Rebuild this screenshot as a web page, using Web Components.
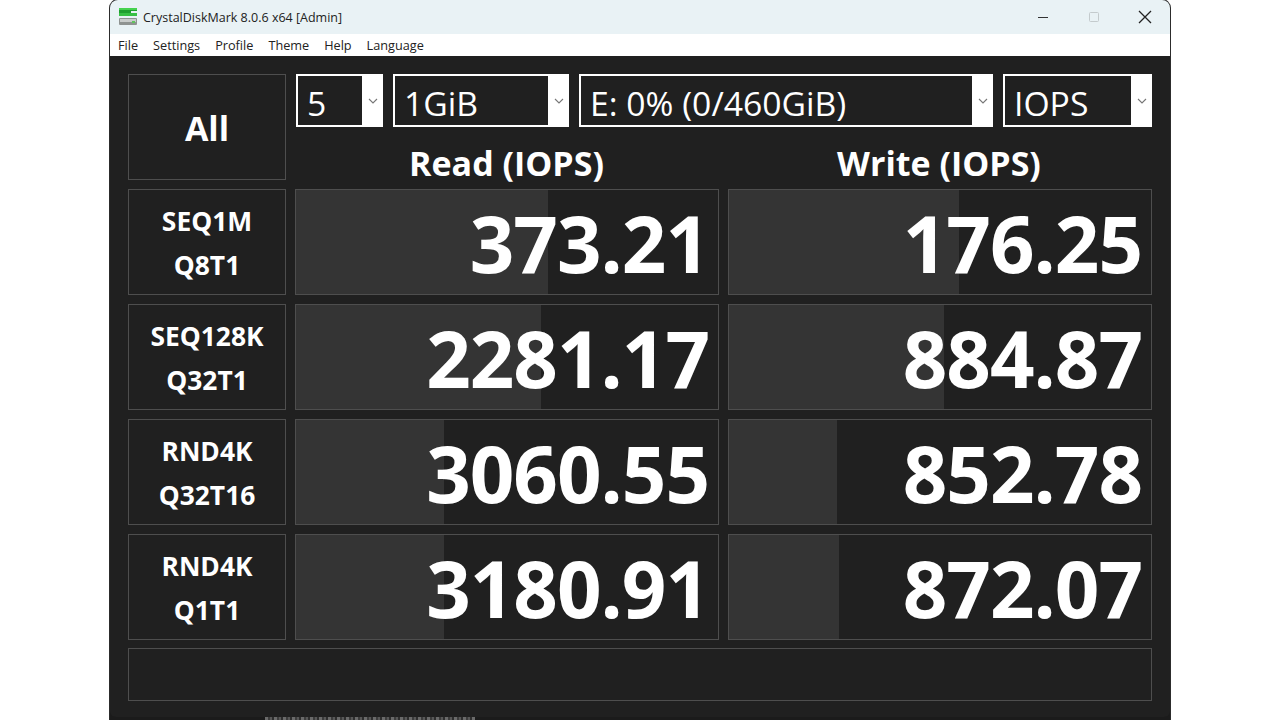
<!DOCTYPE html>
<html>
<head>
<meta charset="utf-8">
<title>CrystalDiskMark</title>
<style>
    html, body { margin: 0; height: 100%; background: #fff; overflow: hidden; }
    body { font-family: "Open Sans", "Noto Sans", sans-serif; }
</style>
</head>
<body>
<cdm-window>
    <cdm-titlebar slot="chrome">CrystalDiskMark 8.0.6 x64 [Admin]</cdm-titlebar>
    <cdm-menubar slot="chrome"></cdm-menubar>
    <cdm-button class="all">All</cdm-button>
    <cdm-controls></cdm-controls>
    <cdm-row name="SEQ1M" sub="Q8T1" read="373.21" write="176.25" rbar="59.7" wbar="54.5"></cdm-row>
    <cdm-row name="SEQ128K" sub="Q32T1" read="2281.17" write="884.87" rbar="58" wbar="51"></cdm-row>
    <cdm-row name="RND4K" sub="Q32T16" read="3060.55" write="852.78" rbar="35" wbar="25.5"></cdm-row>
    <cdm-row name="RND4K" sub="Q1T1" read="3180.91" write="872.07" rbar="35" wbar="26"></cdm-row>
    <cdm-comment></cdm-comment>
</cdm-window>
<script>
/**
 * Window frame: white page, dark client area, light chrome on top.
 */
class CdmWindow extends HTMLElement {
    constructor() {
        super();
        this.attachShadow({ mode: 'open' }).innerHTML = `
<style>
    :host {
        display: flex;
        flex-direction: column;
        width: 1060px;
        height: 720px;
        margin-left: 110px;
        background: #1b1b1b;
        border-radius: 8px 8px 0 0;
        overflow: hidden;
        box-shadow: 0 0 0 1px #2c2c2c;
    }
    .client {
        flex: 1;
        display: grid;
        grid-template-columns: 158px 1fr;
        grid-auto-rows: min-content;
        column-gap: 9px;
        row-gap: 9px;
        padding: 18px 18px 0 18px;
        align-content: start;
        background: #202020;
        border-radius: 0 0 6px 6px;
    }
    /* bit of whatever sits behind the window, only its top edge shows */
    .behind { height: 3px; flex: none; padding-left: 155px; }
    .behind div {
        width: 210px;
        height: 100%;
        background: repeating-linear-gradient(90deg, #6a6a6a 0 3px, #3c3c3c 3px 5px, #585858 5px 7px, #2e2e2e 7px 9px);
    }
</style>
<slot name="chrome"></slot>
<div class="client"><slot></slot></div>
<div class="behind"><div></div></div>`;
    }
}

class CdmTitlebar extends HTMLElement {
    constructor() {
        super();
        this.attachShadow({ mode: 'open' }).innerHTML = `
<style>
    :host {
        display: flex;
        align-items: center;
        height: 34px;
        background: #e9f2f5;
        color: #222;
        font-size: 12.5px;
        padding-left: 8px;
        box-sizing: border-box;
    }
    .icon { width: 20px; height: 20px; margin-right: 5px; flex: none; }
    .text { flex: 1; }
    .btn { width: 51px; height: 34px; display: flex; align-items: center; justify-content: center; }
    .btn svg { width: 16px; height: 16px; }
</style>
<svg class="icon" viewBox="0 0 20 20">
    <rect x="1" y="1" width="18" height="2" fill="#45d24f"/>
    <rect x="1" y="3" width="18" height="3" fill="#1f9f2f"/>
    <rect x="1" y="6" width="18" height="3" fill="#37c044"/>
    <rect x="13" y="4" width="6" height="2" fill="#e9f2f5"/>
    <rect x="1" y="11" width="18" height="7" rx="1" fill="#8f9391"/>
    <rect x="2" y="12" width="16" height="3" fill="#c9cccb"/>
    <rect x="14" y="14" width="3" height="2" fill="#5fc45c"/>
</svg>
<span class="text"><slot></slot></span>
<div class="btn"><svg viewBox="0 0 16 16"><path d="M3 8.5h10" stroke="#333" stroke-width="1.2"/></svg></div>
<div class="btn"><svg viewBox="0 0 16 16"><rect x="3.5" y="3.5" width="9" height="9" rx="1" fill="none" stroke="#c4cbcd"/></svg></div>
<div class="btn"><svg viewBox="0 0 16 16"><path d="M2 2l12 12M14 2L2 14" stroke="#222" stroke-width="1.3"/></svg></div>`;
    }
}

class CdmMenubar extends HTMLElement {
    constructor() {
        super();
        const items = ['File', 'Settings', 'Profile', 'Theme', 'Help', 'Language'];
        this.attachShadow({ mode: 'open' }).innerHTML = `
<style>
    :host {
        display: flex;
        align-items: center;
        gap: 15px;
        height: 22px;
        background: #fff;
        color: #222;
        font-size: 12.7px;
        padding: 0 0 0 8px;
        box-sizing: border-box;
    }
</style>
${items.map(i => `<span>${i}</span>`).join('')}`;
    }
}

/** Plain bordered dark button, used for All and the test names. */
class CdmButton extends HTMLElement {
    constructor() {
        super();
        this.attachShadow({ mode: 'open' }).innerHTML = `
<style>
    :host {
        display: flex;
        flex-direction: column;
        align-items: center;
        justify-content: center;
        box-sizing: border-box;
        height: 106px;
        padding-top: 2px;
        border: 1px solid #4e4e4e;
        background: #202020;
        color: #fff;
        font-weight: 700;
        font-size: 26.4px;
        line-height: 44px;
    }
    :host(.all) { font-size: 34px; }
</style>
<slot></slot>`;
    }
}

class CdmSelect extends HTMLElement {
    constructor() {
        super();
        this.attachShadow({ mode: 'open' }).innerHTML = `
<style>
    :host {
        display: flex;
        box-sizing: border-box;
        height: 53px;
        background: #fff;
        padding: 2px 0 2px 2px;
    }
    .val {
        flex: 1;
        min-width: 0;
        background: #202020;
        color: #fff;
        font-size: 33.7px;
        line-height: 54px;
        padding-left: 9px;
        white-space: nowrap;
        overflow: hidden;
    }
    .arrow { width: 21px; flex: none; display: flex; align-items: center; justify-content: center; }
    .arrow svg { width: 10px; height: 6px; }
</style>
<div class="val"><slot></slot></div>
<div class="arrow"><svg viewBox="0 0 10 6"><path d="M1 1l4 4 4-4" fill="none" stroke="#777" stroke-width="1.1"/></svg></div>`;
    }
}

class CdmControls extends HTMLElement {
    constructor() {
        super();
        this.attachShadow({ mode: 'open' }).innerHTML = `
<style>
    :host { display: block; height: 106px; }
    .top { display: grid; grid-template-columns: 87px 176px 414px 149px; column-gap: 10px; margin-left: 1px; }
    .heads { display: grid; grid-template-columns: 423px 424px; column-gap: 9px; margin-top: 16px; }
    .head { text-align: center; color: #fff; font-weight: 700; font-size: 34px; line-height: 40px; }
</style>
<div class="top">
    <cdm-select>5</cdm-select>
    <cdm-select>1GiB</cdm-select>
    <cdm-select>E: 0% (0/460GiB)</cdm-select>
    <cdm-select>IOPS</cdm-select>
</div>
<div class="heads">
    <div class="head">Read (IOPS)</div>
    <div class="head">Write (IOPS)</div>
</div>`;
    }
}

/** One result box: a lighter meter behind a right-aligned number. */
class CdmResult extends HTMLElement {
    constructor() {
        super();
        this.attachShadow({ mode: 'open' }).innerHTML = `
<style>
    :host {
        display: flex;
        align-items: center;
        justify-content: flex-end;
        position: relative;
        box-sizing: border-box;
        height: 106px;
        border: 1px solid #4e4e4e;
        background: #202020;
        color: #fff;
        font-weight: 700;
        font-size: 78px;
        letter-spacing: -1px;
        padding: 2px 9px 0 0;
    }
    .bar { position: absolute; left: 0; top: 0; bottom: 0; background: #343434; }
    .num { position: relative; }
</style>
<div class="bar"></div><span class="num"></span>`;
    }
    connectedCallback() {
        this.shadowRoot.querySelector('.bar').style.width = this.getAttribute('bar') + '%';
        this.shadowRoot.querySelector('.num').textContent = this.getAttribute('value');
    }
}

class CdmRow extends HTMLElement {
    constructor() {
        super();
        this.attachShadow({ mode: 'open' });
    }
    connectedCallback() {
        const a = n => this.getAttribute(n);
        this.shadowRoot.innerHTML = `
<style>
    :host { display: contents; }
    .vals { display: grid; grid-template-columns: 424px 424px; column-gap: 9px; }
</style>
<cdm-button><span>${a('name')}</span><span>${a('sub')}</span></cdm-button>
<div class="vals">
    <cdm-result value="${a('read')}" bar="${a('rbar')}"></cdm-result>
    <cdm-result value="${a('write')}" bar="${a('wbar')}"></cdm-result>
</div>`;
    }
}

class CdmComment extends HTMLElement {
    constructor() {
        super();
        this.attachShadow({ mode: 'open' }).innerHTML = `
<style>
    :host {
        display: block;
        grid-column: 1 / -1;
        height: 53px;
        margin-top: -1px;
        box-sizing: border-box;
        border: 1px solid #4e4e4e;
        background: #202020;
    }
</style>`;
    }
}

customElements.define('cdm-window', CdmWindow);
customElements.define('cdm-titlebar', CdmTitlebar);
customElements.define('cdm-menubar', CdmMenubar);
customElements.define('cdm-button', CdmButton);
customElements.define('cdm-select', CdmSelect);
customElements.define('cdm-controls', CdmControls);
customElements.define('cdm-result', CdmResult);
customElements.define('cdm-row', CdmRow);
customElements.define('cdm-comment', CdmComment);
</script>
</body>
</html>
